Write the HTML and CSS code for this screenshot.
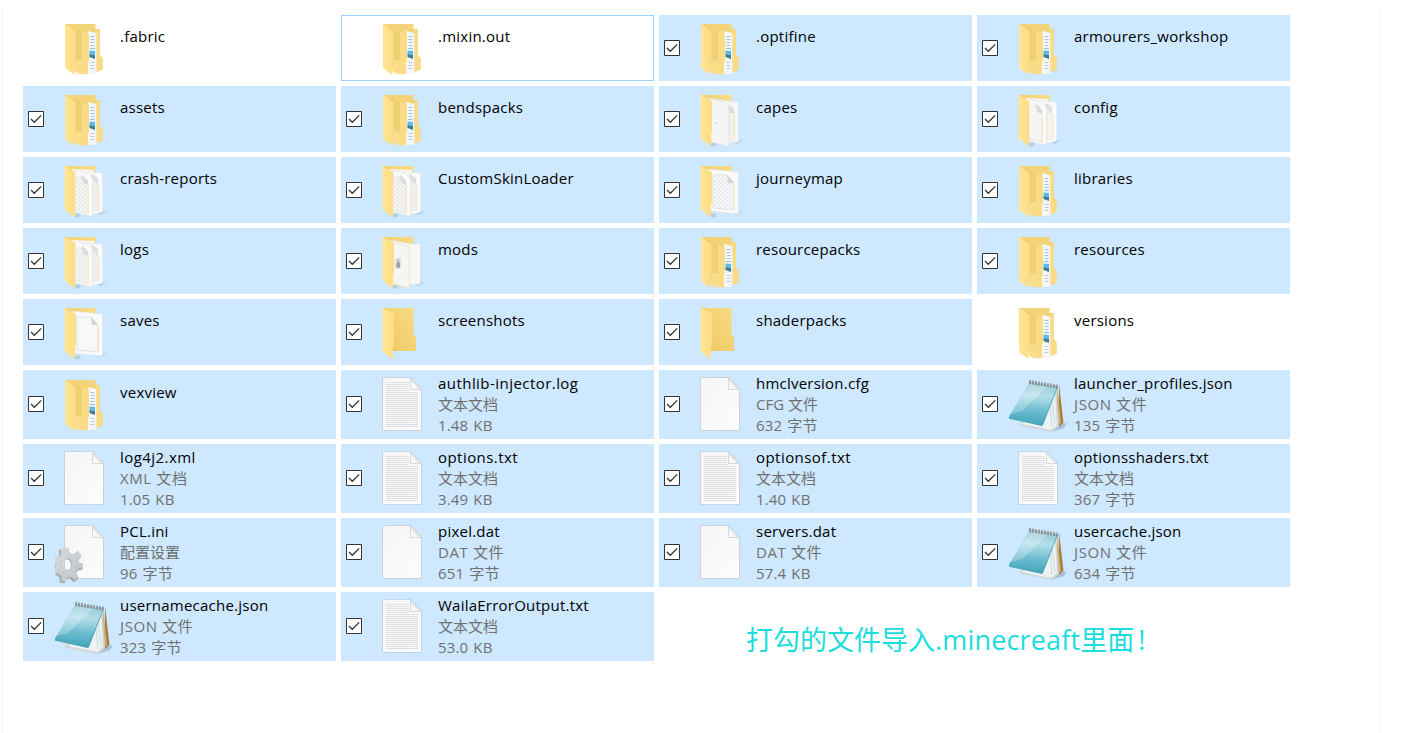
FILE: index.html
```html
<!DOCTYPE html>
<html lang="zh-CN">
<head>
<meta charset="utf-8">
<title>.minecraft</title>
<link rel="stylesheet" href="styles.css">
</head>
<body>
<svg class="defs" width="0" height="0">
  <defs>
    <linearGradient id="gFront" x1="0" y1="0" x2="1" y2="0"><stop offset="0" stop-color="#ffe594"/><stop offset="1" stop-color="#fddd85"/></linearGradient>
    <linearGradient id="gBack" x1="0" y1="1" x2="1" y2="0"><stop offset="0" stop-color="#ecc761"/><stop offset="1" stop-color="#f9dc84"/></linearGradient>
    <linearGradient id="gPage" x1="0" y1="0" x2="1" y2="1"><stop offset="0" stop-color="#f5f5f5"/><stop offset="1" stop-color="#fcfcfc"/></linearGradient>
    <linearGradient id="gFold" x1="0" y1="1" x2="1" y2="0"><stop offset="0.3" stop-color="#f8f8f8"/><stop offset="0.6" stop-color="#d2d5d8"/></linearGradient>
    <linearGradient id="gPad" x1="0.5" y1="0" x2="0.4" y2="1"><stop offset="0" stop-color="#8fc8d6"/><stop offset="0.3" stop-color="#b5dfe8"/><stop offset="0.65" stop-color="#6cbccf"/><stop offset="1" stop-color="#3fa2b8"/></linearGradient>
    <linearGradient id="gGear" x1="0" y1="0" x2="1" y2="1"><stop offset="0" stop-color="#d8dbde"/><stop offset="1" stop-color="#bfc4c8"/></linearGradient>
    <pattern id="hatch" width="4" height="4" patternUnits="userSpaceOnUse"><path d="M0 0l4 4M4 0l-4 4" stroke="#e2e2e2" stroke-width=".6"/></pattern>

    <g id="back"><path d="M10 5h30.500v43H22z" fill="url(#gBack)"/></g>
    <g id="shade"><path d="M19 54l5-2 2 3-5 2zM41 52l11-2-6 4z" fill="#6d8296" opacity=".25"/></g>

    <symbol id="nested" viewBox="0 0 60 66">
      <path d="M10 5h30.500v5H45v26l2.500 3v11.500L42 53 20 50z" fill="#f3d478"/>
      <path d="M33 12l8.500 2v40.500L33 55z" fill="#f5f6f8"/>
      <path d="M35.500 17.500h4M35.500 20.500h4M35.500 23.500h4M35.500 26.500h4" stroke="#9dc6e2" stroke-width="1"/>
      <path d="M35.500 43.500h4M35.500 46.500h4M35.500 49.500h4" stroke="#c3c9d1" stroke-width="1"/>
      <path d="M35 29.500h5" stroke="#8cc7ea" stroke-width="1.200"/>
      <path d="M34.500 31.500l5.500.5v4l-5.500-1z" fill="#5bb9ee"/><path d="M34.500 35l5.500 1v4l-5.500-2z" fill="#3b7f90"/>
      <path d="M41.500 12l3.500-2v26l2.500 3v11.500L42 53z" fill="#fadb85"/>
      <path d="M15 8l19 7v26l-1 3v11l-5 .5L20 51z" fill="#fadc86"/>
      <path d="M15 8l12 5v28l-1.500 3v11.500L20 52z" fill="#efd075"/>
      <path d="M20 42l6-1v14l-6-2z" fill="#fadd87"/>
      <path d="M15 8l12 5" fill="none" stroke="#e6c666" stroke-width=".6"/>
      <path d="M10 5l10.500 7v29.500l-1 2v12.500L10.500 49.500 10 47z" fill="url(#gFront)"/>
    </symbol>

    <symbol id="empty" viewBox="0 0 60 66">
      <path d="M10 5h30.500v27l2.500 2v14H20z" fill="url(#gBack)"/>
      <path d="M9.500 5L21 11v31l-1 2v12.500L10.500 49l-1-2z" fill="url(#gFront)"/>
    </symbol>

    <symbol id="twopages" viewBox="0 0 60 66">
      <use href="#shade"/><use href="#back"/>
      <path d="M17 8l22 1v44L24 48z" fill="#f7f7f7"/>
      <path d="M32 11l15.500 1v39l-13 3z" fill="#fafafa" stroke="#e4e4e4" stroke-width=".5"/>
      <path d="M38 22l6 2v25l-6 1z" fill="#f4f4f2" stroke="#dedede" stroke-width=".6"/><path d="M36 12l7 5v7l-6-5z" fill="#e0e0e0"/><path d="M43 28v19" stroke="#ffe6a8" stroke-width=".7"/>
      <path d="M20 9l12 3 5.500 5v38.500L20 51z" fill="#fafafa" stroke="#dedede" stroke-width=".6"/>
      <path d="M20 16h8l5 7v29l-13-3z" fill="#f5f5f5" stroke="#dcdcdc" stroke-width=".7"/>
      <path d="M27 13l6 7v4l-5-2z" fill="#d9d9d9"/><path d="M33.500 25v27" stroke="#ffe4a0" stroke-width=".7"/>
      <path d="M9.500 5L20 11v45.500L10.500 49l-1-2z" fill="url(#gFront)"/>
    </symbol>

    <symbol id="hatched" viewBox="0 0 60 66">
      <use href="#twopages"/><path d="M21 17h6l5 7v27l-11-3zM39 24l4 2v22h-4z" fill="url(#hatch)"/>
    </symbol>

    <symbol id="blankpages" viewBox="0 0 60 66">
      <use href="#shade"/><use href="#back"/>
      <path d="M18 8l19 3 10.500 1v40L34 53z" fill="#f7f7f7" stroke="#dfdfdf" stroke-width=".5"/>
      <path d="M38 22h5v28h-5z" fill="#f1f1ee" stroke="#ddd" stroke-width=".6"/><path d="M36 13l7 6v4h-5z" fill="#d9dcde"/><path d="M43.500 25v21" stroke="#ffe4a0" stroke-width=".7"/>
      <path d="M18 8l20 6v41.500l-1 1L20 52z" fill="#f5f5f5" stroke="#dcdcdc" stroke-width=".6"/>
      <path d="M9.500 5L21 11v31l-1 2v12.500L10.500 49l-1-2z" fill="url(#gFront)"/><circle cx="25" cy="33" r=".7" fill="#bbb"/>
    </symbol>

    <symbol id="modpages" viewBox="0 0 60 66">
      <use href="#shade"/><use href="#back"/>
      <path d="M17 8l22 4 8.500-1v41L31 53z" fill="#f7f7f7" stroke="#d6d8da" stroke-width=".5"/>
      <path d="M17 9l19.500 6v41L20 52z" fill="#f5f5f5" stroke="#f0dca0" stroke-width=".6"/>
      <path d="M22 27l6-1v10l-6 1z" fill="#dce2e6"/><path d="M24 31l2-2 1 3v4l-4-1z" fill="#9ba1a4"/><path d="M25 27v4" stroke="#c59880"/>
      <path d="M9.500 5L21 11v31l-1 2v12.500L10.500 49l-1-2z" fill="url(#gFront)"/>
    </symbol>

    <symbol id="onepage" viewBox="0 0 60 66">
      <use href="#shade"/><use href="#back"/>
      <path d="M17 8l30.500 3v42L20 50z" fill="#fafafa" stroke="#e0e0e0" stroke-width=".5"/>
      <path d="M22 14h14l7 8v27L22 47z" fill="#f7f8f9" stroke="#d9d9d9" stroke-width=".8"/>
      <path d="M36 14l7 8h-6z" fill="#cfd3d6"/><path d="M43.500 23v25" stroke="#ffe3a0" stroke-width=".7"/>
      <path d="M9.500 5L21 11v31l-1 2v12.500L10.500 49l-1-2z" fill="url(#gFront)"/>
    </symbol>

    <symbol id="hatchedpage" viewBox="0 0 60 66">
      <use href="#onepage"/><path d="M23 15h13l6 8v25L23 46z" fill="url(#hatch)"/>
    </symbol>

    <symbol id="doc" viewBox="0 0 60 69">
      <path d="M9.500 7.500h28l11 12v41h-39z" fill="url(#gPage)" stroke="#c6d3df"/>
      <path d="M37.500 7.500l11 12h-11z" fill="url(#gFold)" stroke="#c6cdd4" stroke-width=".7"/>
    </symbol>

    <symbol id="text" viewBox="0 0 60 69">
      <use href="#doc"/>
      <path d="M24.500 12v10" stroke="#dfe1e3" stroke-width="23" stroke-dasharray="1 1"/>
      <path d="M29 22v36" stroke="#dcdfe1" stroke-width="32" stroke-dasharray="1 1"/>
    </symbol>

    <symbol id="config" viewBox="0 0 60 69">
      <use href="#doc"/>
      <g transform="translate(13.500 46) scale(1 .97)" fill-rule="evenodd">
        <path d="M-4-16l5-1 1 5 4 2 4-4 4 5-3 4 1 4 3 0 0 6-5 1-2 4 3 4-5 4-4-4-4 1-1 4-5-1 0-5-4-3-4 2-2-5 4-3 0-4-4-2 2-6 5 1 3-3-1-5 4-2zM-1-6a4.500 6 0 1 0 0 12a4.500 6 0 1 0 0-12z" fill="#a9aeb2" transform="translate(-1 1)"/>
        <path d="M-4-16l4-1 1 5 4 2 4-4 4 5-3 4 1 4 3 0 0 5-5 1-2 4 3 4-4 3-4-3-4 1-1 4-4-1 0-5-4-3-4 2-2-4 4-3 0-4-4-2 2-6 5 1 3-3-1-5 4-2zM-1-6a4.500 6 0 1 0 0 12a4.500 6 0 1 0 0-12z" fill="url(#gGear)"/>
      </g>
    </symbol>

    <symbol id="notepad" viewBox="0 0 60 69">
      <path d="M44 57l14-4-3 5-13 4z" fill="#526777" opacity=".3"/>
      <path d="M50 14l4.500 39-5 4z" fill="#a47f3f"/><path d="M48 15l4 38-4 3z" fill="#cfae72"/>
      <path d="M47 15l3 41-7 6-32-6v-3z" fill="#d0d7db"/><path d="M46 22l2 33-6 5-29-6z" fill="#edf3f5"/>
      <path d="M43 31l3 23M41 36l2 21" stroke="#abc8d3" stroke-width=".6"/>
      <path d="M21 12l28 5-15 38q-.5 1-1.500.8L-1 48z" fill="url(#gPad)"/>
      <path d="M22 13l17 3-26 25L1 44z" fill="#fff" opacity=".25"/>
      <path d="M-1 48l34 7.500 15-37.500" fill="none" stroke="#4ba2b6" stroke-width=".8"/>
      <path d="M20 11l29 5v2L20 14z" fill="#a5b6bc"/>
      <path d="M21 14v-4M24 14.500v-4M27 15v-4M30 15.500v-4M33 16v-4M36 16.500v-4M39 17v-4M42 17.500v-4M45 18v-4M48 18.500v-4" stroke="#69757b" stroke-width="1"/>
      <path d="M22.500 13v-3M25.500 13.500v-3M28.500 14v-3M31.500 14.500v-3M34.500 15v-3M37.500 15.500v-3M40.500 16v-3M43.500 16.500v-3" stroke="#d3dade" stroke-width="1"/>
    </symbol>

    <symbol id="check" viewBox="0 0 16 16"><path d="M.5.5h15v15H.5z" fill="#fff" stroke="#333"/><path d="M3 8l3.300 3.300 6.900-6.900" fill="none" stroke="#333" stroke-width="1.300"/></symbol>
  </defs>
</svg>

<div class="window">
<main class="files">
  <article class="tile plain"><svg class="icon"><use href="#nested"/></svg><p class="name">.fabric</p></article>
  <article class="tile focused"><svg class="icon"><use href="#nested"/></svg><p class="name">.mixin.out</p></article>
  <article class="tile"><svg class="box"><use href="#check"/></svg><svg class="icon"><use href="#nested"/></svg><p class="name">.optifine</p></article>
  <article class="tile"><svg class="box"><use href="#check"/></svg><svg class="icon"><use href="#nested"/></svg><p class="name">armourers_workshop</p></article>

  <article class="tile"><svg class="box"><use href="#check"/></svg><svg class="icon"><use href="#nested"/></svg><p class="name">assets</p></article>
  <article class="tile"><svg class="box"><use href="#check"/></svg><svg class="icon"><use href="#nested"/></svg><p class="name">bendspacks</p></article>
  <article class="tile"><svg class="box"><use href="#check"/></svg><svg class="icon"><use href="#blankpages"/></svg><p class="name">capes</p></article>
  <article class="tile"><svg class="box"><use href="#check"/></svg><svg class="icon"><use href="#twopages"/></svg><p class="name">config</p></article>

  <article class="tile"><svg class="box"><use href="#check"/></svg><svg class="icon"><use href="#hatched"/></svg><p class="name">crash-reports</p></article>
  <article class="tile"><svg class="box"><use href="#check"/></svg><svg class="icon"><use href="#hatched"/></svg><p class="name">CustomSkinLoader</p></article>
  <article class="tile"><svg class="box"><use href="#check"/></svg><svg class="icon"><use href="#hatchedpage"/></svg><p class="name">journeymap</p></article>
  <article class="tile"><svg class="box"><use href="#check"/></svg><svg class="icon"><use href="#nested"/></svg><p class="name">libraries</p></article>

  <article class="tile"><svg class="box"><use href="#check"/></svg><svg class="icon"><use href="#hatched"/></svg><p class="name">logs</p></article>
  <article class="tile"><svg class="box"><use href="#check"/></svg><svg class="icon"><use href="#modpages"/></svg><p class="name">mods</p></article>
  <article class="tile"><svg class="box"><use href="#check"/></svg><svg class="icon"><use href="#nested"/></svg><p class="name">resourcepacks</p></article>
  <article class="tile"><svg class="box"><use href="#check"/></svg><svg class="icon"><use href="#nested"/></svg><p class="name">resources</p></article>

  <article class="tile"><svg class="box"><use href="#check"/></svg><svg class="icon"><use href="#onepage"/></svg><p class="name">saves</p></article>
  <article class="tile"><svg class="box"><use href="#check"/></svg><svg class="icon"><use href="#empty"/></svg><p class="name">screenshots</p></article>
  <article class="tile"><svg class="box"><use href="#check"/></svg><svg class="icon"><use href="#empty"/></svg><p class="name">shaderpacks</p></article>
  <article class="tile plain"><svg class="icon"><use href="#nested"/></svg><p class="name">versions</p></article>

  <article class="tile tall"><svg class="box"><use href="#check"/></svg><svg class="icon"><use href="#nested"/></svg><p class="name">vexview</p></article>
  <article class="tile file"><svg class="box"><use href="#check"/></svg><svg class="icon"><use href="#text"/></svg><div class="info"><p class="name loose">authlib-injector.log</p><p>文本文档</p><p class="size">1.48 KB</p></div></article>
  <article class="tile file"><svg class="box"><use href="#check"/></svg><svg class="icon"><use href="#doc"/></svg><div class="info"><p class="name">hmclversion.cfg</p><p>CFG 文件</p><p class="size">632 字节</p></div></article>
  <article class="tile file"><svg class="box"><use href="#check"/></svg><svg class="icon"><use href="#notepad"/></svg><div class="info"><p class="name">launcher_profiles.json</p><p class="json">JSON 文件</p><p class="size">135 字节</p></div></article>

  <article class="tile file"><svg class="box"><use href="#check"/></svg><svg class="icon"><use href="#doc"/></svg><div class="info"><p class="name loose">log4j2.xml</p><p class="json">XML 文档</p><p class="size">1.05 KB</p></div></article>
  <article class="tile file"><svg class="box"><use href="#check"/></svg><svg class="icon"><use href="#text"/></svg><div class="info"><p class="name loose">options.txt</p><p>文本文档</p><p class="size">3.49 KB</p></div></article>
  <article class="tile file"><svg class="box"><use href="#check"/></svg><svg class="icon"><use href="#text"/></svg><div class="info"><p class="name loose">optionsof.txt</p><p>文本文档</p><p class="size">1.40 KB</p></div></article>
  <article class="tile file"><svg class="box"><use href="#check"/></svg><svg class="icon"><use href="#text"/></svg><div class="info"><p class="name">optionsshaders.txt</p><p>文本文档</p><p class="size">367 字节</p></div></article>

  <article class="tile file"><svg class="box"><use href="#check"/></svg><svg class="icon"><use href="#config"/></svg><div class="info"><p class="name">PCL.ini</p><p>配置设置</p><p class="size">96 字节</p></div></article>
  <article class="tile file"><svg class="box"><use href="#check"/></svg><svg class="icon"><use href="#doc"/></svg><div class="info"><p class="name">pixel.dat</p><p class="json">DAT 文件</p><p class="size">651 字节</p></div></article>
  <article class="tile file"><svg class="box"><use href="#check"/></svg><svg class="icon"><use href="#doc"/></svg><div class="info"><p class="name">servers.dat</p><p class="json">DAT 文件</p><p class="size">57.4 KB</p></div></article>
  <article class="tile file"><svg class="box"><use href="#check"/></svg><svg class="icon"><use href="#notepad"/></svg><div class="info"><p class="name">usercache.json</p><p class="json">JSON 文件</p><p class="size">634 字节</p></div></article>

  <article class="tile file"><svg class="box"><use href="#check"/></svg><svg class="icon"><use href="#notepad"/></svg><div class="info"><p class="name">usernamecache.json</p><p class="json">JSON 文件</p><p class="size">323 字节</p></div></article>
  <article class="tile file"><svg class="box"><use href="#check"/></svg><svg class="icon"><use href="#text"/></svg><div class="info"><p class="name">WailaErrorOutput.txt</p><p>文本文档</p><p class="size">53.0 KB</p></div></article>
  <p class="note">打勾的文件导入<span class="latin">.minecreaft</span>里面<span class="bang">!</span></p>
</main>
</div>
</body>
</html>
```
FILE: styles.css
```css
* { box-sizing: border-box; }
body { margin: 0; height: 733px; overflow: hidden; background: #fff; font-family: "Open Sans", "Noto Sans CJK SC", sans-serif; }
p { margin: 0; }
.defs { display: block; }
.window { margin: 10px 0 0 2px; width: 1379px; height: 723px; padding: 5px 0 0 20px; border: solid #f7f7f7; border-width: 0 1px; }
.window { margin-top: 7px; padding-top: 8px; height: 726px; }
.files { display: grid; grid-template-columns: repeat(4, 313px); grid-template-rows: repeat(5, 66px) repeat(4, 69px); gap: 5px; }
.tile { display: grid; grid-template-columns: 32px 65px 1fr; grid-template-rows: 100%; background: #cde8ff; font-size: 15px; line-height: 21px; color: #707070; }
.plain, .focused { background: #fff; }
.focused { box-shadow: inset 0 0 0 1px #99d1ff; }
.box { grid-column: 1; grid-row: 1; width: 16px; height: 16px; margin: 25px 0 0 5px; }
.tall .box, .file .box { margin-top: 26px; }
.icon { grid-column: 2; grid-row: 1; width: 60px; height: 66px; overflow: visible; margin-top: 4px; }
.tall .icon { margin-top: 5px; }
.file .icon { height: 69px; margin-top: 0; }
.name { color: #000; white-space: nowrap; letter-spacing: .23px; }
.loose { letter-spacing: .45px; }
.json { letter-spacing: .6px; }
.size { letter-spacing: .15px; word-spacing: 1px; }
.tile > .name { grid-column: 3; grid-row: 1; padding-top: 11px; }
.tall > .name { padding-top: 12px; }
.info { grid-column: 3; grid-row: 1; padding-top: 3px; white-space: nowrap; }
.note { grid-column: 3 / 5; justify-self: start; padding: 27px 0 0 87px; color: #1cdddd; font-size: 27px; line-height: 42px; white-space: nowrap; }
.latin { letter-spacing: .17px; }
.bang { margin-left: 4px; }
```
